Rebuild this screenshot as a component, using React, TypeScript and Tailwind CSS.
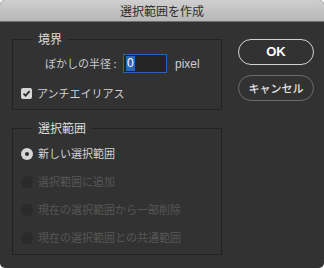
export default function App() {
  const radios = [
    { label: "新しい選択範囲", on: true, enabled: true },
    { label: "選択範囲に追加", on: false, enabled: false },
    { label: "現在の選択範囲から一部削除", on: false, enabled: false },
    { label: "現在の選択範囲との共通範囲", on: false, enabled: false },
  ];

  return (
    <div
      className="w-[324px] h-[268px] bg-white"
      style={{ fontFamily: '"Noto Sans CJK JP", "Liberation Sans", sans-serif' }}
    >
      <div className="w-full h-full rounded-[5px] overflow-hidden bg-[#323232] flex flex-col">
        {/* Title bar */}
        <div className="h-[22px] shrink-0 bg-gradient-to-b from-[#cfcfcf] to-[#b7b7b7] border-b border-[#6e6e6e] flex items-center justify-center">
          <span className="text-[12px] leading-none text-[#2e2e2e]">選択範囲を作成</span>
        </div>

        <div className="flex pl-[12px] pt-[9px]">
          {/* Left column */}
          <div className="w-[210px] flex flex-col">
            <fieldset className="border border-[#222222] h-[79px] px-[8px]">
              <legend className="ml-[11px] px-[6px] text-[12px] leading-[16px] text-[#dedede]">境界</legend>
              <div className="flex items-center pl-[24px] mt-[7px] h-[19px]">
                <span className="text-[11px] text-[#cbcbcb] w-[78px]">ぼかしの半径 :</span>
                <div className="w-[44px] h-[19px] border border-[#2a64b0] bg-[#242424] flex items-center px-[2px]">
                  <span className="bg-[#2b66bd] text-white text-[12px] leading-[15px] px-[1px]" style={{ fontFamily: '"Liberation Sans", sans-serif' }}>0</span>
                </div>
                <span className="ml-[8px] text-[12px] text-[#cfcfcf]" style={{ fontFamily: '"Liberation Sans", sans-serif' }}>pixel</span>
              </div>
              <div className="flex items-center mt-[12px]">
                <div className="w-[11px] h-[11px] rounded-[2px] bg-[#d6d6d6] flex items-center justify-center">
                  <svg width="9" height="9" viewBox="0 0 9 9">
                    <path d="M1.5 4.6 L3.6 6.7 L7.6 2.2" fill="none" stroke="#2c2c2c" strokeWidth="1.8" />
                  </svg>
                </div>
                <span className="ml-[5px] text-[11px] text-[#d2d2d2]">アンチエイリアス</span>
              </div>
            </fieldset>

            <fieldset className="mt-[10px] border border-[#222222] h-[135px] px-[8px]">
              <legend className="ml-[11px] px-[6px] text-[12px] leading-[16px] text-[#dedede]">選択範囲</legend>
              <div className="flex flex-col gap-[15px] mt-[11px]">
                {radios.map((r) => (
                  <div key={r.label} className="flex items-center h-[13px]">
                    {r.on ? (
                      <div className="w-[12px] h-[12px] rounded-full bg-[#d6d6d6] flex items-center justify-center">
                        <div className="w-[4px] h-[4px] rounded-full bg-[#2e2e2e]" />
                      </div>
                    ) : (
                      <div className="w-[12px] h-[12px] rounded-full bg-[#2a2a2a]" />
                    )}
                    <span className={`ml-[5px] text-[11px] ${r.enabled ? "text-[#d2d2d2]" : "text-[#565656]"}`}>{r.label}</span>
                  </div>
                ))}
              </div>
            </fieldset>
          </div>

          {/* Buttons */}
          <div className="ml-[16px] mt-[8px] flex flex-col gap-[10px]">
            <button className="w-[76px] h-[26px] rounded-full border border-[#d2d2d2] text-white text-[13px] font-bold flex items-center justify-center">
              <span style={{ fontFamily: '"Liberation Sans", sans-serif' }}>OK</span>
            </button>
            <button className="w-[76px] h-[26px] rounded-full border border-[#6c6c6c] text-[#e6e6e6] text-[11px] font-medium flex items-center justify-center">
              キャンセル
            </button>
          </div>
        </div>
      </div>
    </div>
  );
}
